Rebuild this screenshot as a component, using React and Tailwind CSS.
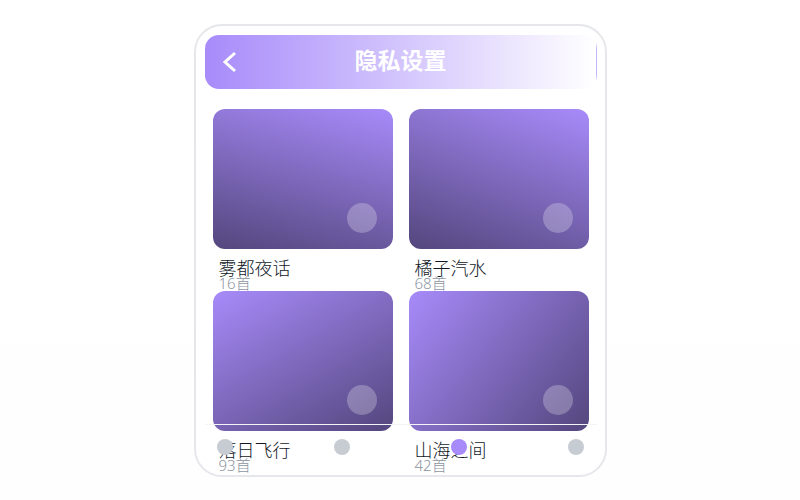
const albums = [
  { title: "雾都夜话", count: 16, cover: "bg-[linear-gradient(195deg,#a78bfa,#54467d)]" },
  { title: "橘子汽水", count: 68, cover: "bg-[linear-gradient(200deg,#a78bfa,#54467d)]" },
  { title: "落日飞行", count: 93, cover: "bg-[linear-gradient(150deg,#a78bfa,#54467d)]" },
  { title: "山海之间", count: 42, cover: "bg-[linear-gradient(130deg,#a78bfa,#54467d)]" },
];

const tabs = ["首页", "发现", "音乐", "我的"];

function Header() {
  return (
    <header className="flex h-[54px] items-center rounded-[14px] bg-[linear-gradient(90deg,#a78bfa,#ffffff_calc(100%-1px),#c4b5fd_calc(100%-1px))] px-3 text-white">
      <button type="button" aria-label="返回" className="flex size-6 items-center justify-center">
        <svg viewBox="0 0 24 24" className="size-6" fill="none" stroke="currentColor" strokeWidth="3">
          <path d="M18 3 8 12l10 9" />
        </svg>
      </button>
      <h1 className="flex-1 pb-1 text-center text-[23px] leading-8 font-bold">隐私设置</h1>
      <span className="size-6" />
    </header>
  );
}

function Album({ title, count, cover }) {
  return (
    <article>
      <div className={`flex h-[140px] items-end justify-end rounded-xl p-4 ${cover}`}>
        <button type="button" aria-label={`播放${title}`} className="size-[30px] rounded-full bg-white/25" />
      </div>
      <div className="px-1.5 pt-2 pb-1 font-light">
        <h2 className="text-lg leading-[22px] text-[#111827]">{title}</h2>
        <p className="text-[15px] leading-2 text-[#8b95a1]">{count}首</p>
      </div>
    </article>
  );
}

export default function App() {
  return (
    <div className="flex min-h-screen items-center justify-center bg-[linear-gradient(180deg,#ffffff,#fefefe)] font-['Noto_Sans','Noto_Sans_CJK_SC',sans-serif]">
      <main className="relative w-full max-w-[413px] rounded-[28px] border-2 border-[#e5e7eb] bg-white pt-[9px] pr-2 pb-0.5 pl-[9px]">
        <Header />
        <section className="grid grid-cols-2 gap-x-4 px-2 pt-5">
          {albums.map((album) => (
            <Album key={album.title} {...album} />
          ))}
        </section>
        <nav className="absolute right-2 bottom-0 left-[9px] flex h-[51px] justify-between border-t border-[#f3f4f6] px-3 pt-3.5">
          {tabs.map((tab) => (
            <button
              key={tab}
              type="button"
              aria-label={tab}
              className={`size-4 rounded-full ${tab === "音乐" ? "bg-[#a78bfa]" : "bg-[#c7ccd3]"}`}
            />
          ))}
        </nav>
      </main>
    </div>
  );
}
